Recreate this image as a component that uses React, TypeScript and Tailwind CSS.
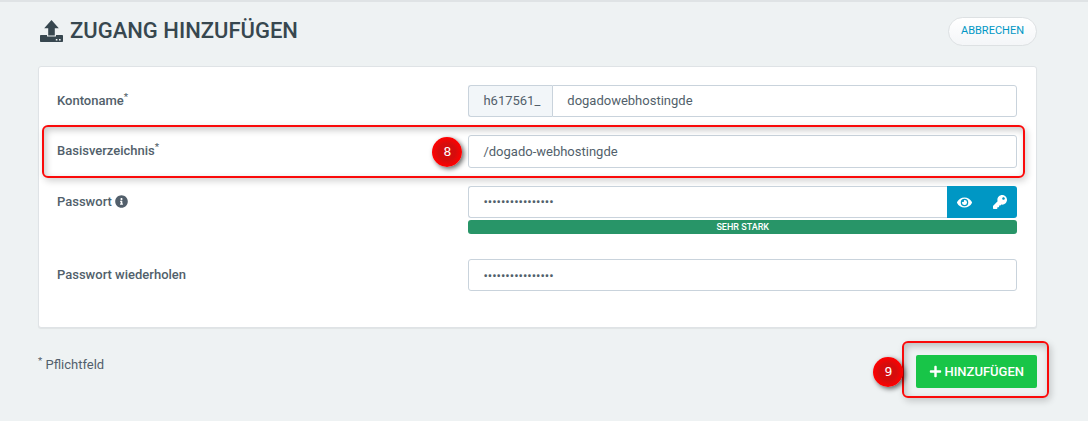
import { useState } from 'react';
import { FaEye, FaInfoCircle, FaKey, FaPlus } from 'react-icons/fa';

function UploadIcon() {
  return (
    <svg className="w-[23px] h-[22px]" viewBox="0 0 23 22" fill="currentColor" aria-hidden="true">
      <path d="M11.5 0L18.8 8.2H14.8V15.4H8.2V8.2H4.2Z" />
      <path
        fillRule="evenodd"
        d="M.8 15H7V16.6H16V15H22.2Q23 15 23 15.8V21.2Q23 22 22.2 22H.8Q0 22 0 21.2V15.8Q0 15 .8 15ZM15.8 19V20.4H17.4V19ZM19 19V20.4H20.6V19Z"
      />
    </svg>
  );
}

function Marker({ label, className }: { label: string; className: string }) {
  return (
    <span
      className={`absolute w-[30px] h-[30px] rounded-full bg-radial from-[#d60c0c] from-40% to-[#ff0000] to-70% text-white font-['DejaVu_Sans_Mono',monospace] text-[13px] flex items-center justify-center shadow-[2px_2px_5px_rgba(0,0,0,0.6)] ${className}`}
    >
      {label}
    </span>
  );
}

function Highlight({ className }: { className: string }) {
  return (
    <div
      className={`absolute pointer-events-none rounded-md border-2 border-[#fa0a0a] shadow-[2px_3px_7px_rgba(0,0,0,0.18),inset_2px_3px_7px_rgba(0,0,0,0.22)] ${className}`}
    />
  );
}

const rowClass = 'relative grid grid-cols-[3fr_4fr]';
const labelClass = 'pt-1.5 font-medium leading-5';
const inputClass = 'block w-full min-w-0 rounded-[3px] border border-[#c9d3dc] bg-white px-3.5 outline-none';

export default function App() {
  const [account, setAccount] = useState('dogadowebhostingde');
  const [directory, setDirectory] = useState('/dogado-webhostingde');
  const [password, setPassword] = useState('geheimespasswort');
  const [repeat, setRepeat] = useState('geheimespasswort');
  const [visible, setVisible] = useState(false);

  return (
    <div className="min-h-screen bg-[#eef2f3] border-t-2 border-[#dfe3e5] pl-[38px] pr-[51px] pb-5 font-['Roboto',sans-serif] text-[13px] text-[#525f6b]">
      {/* Header */}
      <header className="flex items-center justify-between pt-3.5 mb-5">
        <h1 className="flex items-center gap-[7px] pl-0.5 text-[22px] leading-[30px] font-medium text-[#37474f]">
          <UploadIcon />
          ZUGANG HINZUFÜGEN
        </h1>
        <button
          type="button"
          className="h-[29px] px-3 rounded-full border border-[#dde1e3] bg-linear-to-b from-white to-[#f4f6f8] text-[11px] text-[#0097c4]"
        >
          ABBRECHEN
        </button>
      </header>

      <form onSubmit={(e) => e.preventDefault()}>
        <div className="rounded-[3px] border border-[#dfe3e6] bg-white pt-[18px] pl-[18px] pr-[19px] pb-9 shadow-[0_1px_1px_rgba(0,0,0,0.06)] flex flex-col gap-[18px]">
          <div className={rowClass}>
            <label htmlFor="account" className={labelClass}>
              Kontoname<sup>*</sup>
            </label>
            <div className="flex h-8">
              <span className="flex items-center rounded-l-[3px] border border-r-0 border-[#c9d3dc] bg-[#f2f6f9] pl-3.5 pr-3">
                h617561_
              </span>
              <input
                id="account"
                type="text"
                value={account}
                onChange={(e) => setAccount(e.target.value)}
                className={`${inputClass} rounded-l-none`}
              />
            </div>
          </div>

          <div className={rowClass}>
            <label htmlFor="directory" className={labelClass}>
              Basisverzeichnis<sup>*</sup>
            </label>
            <div className="relative">
              <input
                id="directory"
                type="text"
                value={directory}
                onChange={(e) => setDirectory(e.target.value)}
                className={`${inputClass} h-[33px]`}
              />
              <Marker label="8" className="-left-9 top-0.5" />
            </div>
            <Highlight className="-left-[15px] -right-2 -top-2.5 -bottom-2.5" />
          </div>

          <div className={rowClass}>
            <label htmlFor="password" className={labelClass}>
              Passwort <FaInfoCircle className="inline w-[13px] h-[13px] -mt-0.5" />
            </label>
            <div>
              <div className="flex h-8">
                <input
                  id="password"
                  type={visible ? 'text' : 'password'}
                  value={password}
                  onChange={(e) => setPassword(e.target.value)}
                  className={`${inputClass} rounded-r-none border-r-0`}
                />
                <div className="flex shrink-0 rounded-r-[3px] bg-[#0097c4] text-white">
                  <button
                    type="button"
                    aria-label="Passwort anzeigen"
                    onClick={() => setVisible(!visible)}
                    className="w-[35px] flex items-center justify-center"
                  >
                    <FaEye className="w-[15px] h-[15px]" />
                  </button>
                  <button type="button" aria-label="Passwort generieren" className="w-[35px] flex items-center justify-center">
                    <FaKey className="w-3.5 h-3.5" />
                  </button>
                </div>
              </div>
              <div className="mt-0.5 h-3.5 rounded-[3px] bg-[#289568] text-center text-[9px] leading-[14px] font-medium text-white">
                SEHR STARK
              </div>
            </div>
          </div>

          <div className={`${rowClass} mt-[7px]`}>
            <label htmlFor="repeat" className={labelClass}>
              Passwort wiederholen
            </label>
            <input
              id="repeat"
              type="password"
              value={repeat}
              onChange={(e) => setRepeat(e.target.value)}
              className={`${inputClass} h-8`}
            />
          </div>
        </div>

        {/* Footer */}
        <div className="mt-[27px] flex items-start justify-between">
          <p className="leading-5">
            <sup>*</sup> Pflichtfeld
          </p>
          <div className="relative">
            <button
              type="submit"
              className="flex h-[33px] items-center gap-0.5 rounded-[2px] bg-[#18c548] px-[13px] font-medium text-white"
            >
              <FaPlus className="w-[13px] h-[13px]" />
              HINZUFÜGEN
            </button>
            <Highlight className="-left-3.5 -right-3 -top-3.5 -bottom-2.5" />
            <Marker label="9" className="-left-[43px] top-0.5" />
          </div>
        </div>
      </form>
    </div>
  );
}
